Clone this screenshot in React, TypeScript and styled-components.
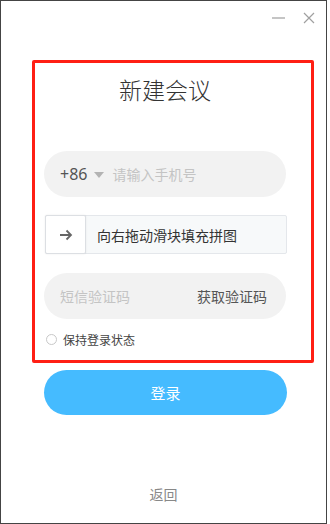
import styled, {createGlobalStyle} from "styled-components";

const Global = createGlobalStyle`
    html, body {
        margin: 0;
        padding: 0;
        background: #fff;
    }
    body {
        font-family: "Noto Sans CJK SC", "Noto Sans", sans-serif;
    }
`

const Window = styled.div`
    box-sizing: border-box;
    width: 327px;
    height: 524px;
    border: 1px solid #444;
    background: #fff;
    display: flex;
    flex-direction: column;
`

const TitleBar = styled.div`
    height: 36px;
    display: flex;
    justify-content: flex-end;
    align-items: center;
    padding-right: 10px;
    gap: 17px;
`

const Ctrl = styled.div`
    width: 14px;
    height: 14px;
    display: flex;
    align-items: center;
    justify-content: center;
    margin-top: -2px;
`

const Highlight = styled.div`
    box-sizing: border-box;
    margin: 23px 0 0 31px;
    width: 282px;
    height: 303px;
    border: 3px solid #ff1f14;
    border-radius: 2px;
    display: flex;
    flex-direction: column;
`

const Title = styled.div`
    margin: 10px 0 0 9px;
    width: 242px;
    height: 32px;
    line-height: 32px;
    text-align: center;
    font-size: 23px;
    font-weight: 300;
    color: #333;
`

const Field = styled.div<{ $mt: number }>`
    box-sizing: border-box;
    margin: ${p => p.$mt}px 0 0 9px;
    width: 242px;
    height: 46px;
    border-radius: 23px;
    background: #f2f2f2;
    display: flex;
    align-items: center;
    padding: 0 19px 0 16px;
    font-size: 14px;
`

const Prefix = styled.span`
    font-size: 16px;
    color: #555;
    font-family: "Noto Sans", sans-serif;
`

const Caret = styled.span`
    width: 0;
    height: 0;
    border-left: 5px solid transparent;
    border-right: 5px solid transparent;
    border-top: 6px solid #b3b3b3;
    margin: 2px 8px 0 7px;
`

const Placeholder = styled.span`
    color: #c4c4c4;
    flex: 1;
`

const Action = styled.span`
    color: #555;
`

const Slider = styled.div`
    box-sizing: border-box;
    margin: 18px 0 0 10px;
    width: 242px;
    height: 39px;
    border: 1px solid #e4e7eb;
    border-radius: 2px;
    background: #f7f9fa;
    display: flex;
    align-items: center;
`

const Knob = styled.div`
    box-sizing: border-box;
    width: 41px;
    height: 39px;
    margin: -1px 0 -1px -1px;
    background: #fff;
    border: 1px solid #dcdfe3;
    border-radius: 2px;
    box-shadow: 0 0 2px rgba(0, 0, 0, 0.08);
    display: flex;
    align-items: center;
    justify-content: center;
`

const SliderText = styled.span`
    margin-left: 11px;
    font-size: 14px;
    color: #333;
`

const Remember = styled.label`
    margin: 12px 0 0 11px;
    display: flex;
    align-items: center;
    font-size: 12px;
    color: #444;
    gap: 6px;
`

const Radio = styled.span`
    box-sizing: border-box;
    width: 11px;
    height: 11px;
    border-radius: 50%;
    border: 1px solid #c8c8c8;
`

const LoginButton = styled.button`
    margin: 7px 0 0 43px;
    width: 243px;
    height: 45px;
    border: none;
    border-radius: 23px;
    background: #45bbff;
    color: #fff;
    font-size: 15px;
    font-family: "Noto Sans CJK SC", sans-serif;
`

const Back = styled.div`
    margin-top: 69px;
    text-align: center;
    font-size: 14px;
    color: #888;
`

export default function App() {
    return (
        <>
            <Global/>
            <Window>
                <TitleBar>
                    <Ctrl>
                        <svg width="13" height="2" viewBox="0 0 13 2">
                            <rect width="13" height="1.2" y="0.4" fill="#a0a0a0"/>
                        </svg>
                    </Ctrl>
                    <Ctrl>
                        <svg width="12" height="12" viewBox="0 0 12 12">
                            <path d="M1 1 L11 11 M11 1 L1 11" stroke="#a0a0a0" strokeWidth="1.2"/>
                        </svg>
                    </Ctrl>
                </TitleBar>
                <Highlight>
                    <Title>新建会议</Title>
                    <Field $mt={46}>
                        <Prefix>+86</Prefix>
                        <Caret/>
                        <Placeholder>请输入手机号</Placeholder>
                    </Field>
                    <Slider>
                        <Knob>
                            <svg width="14" height="12" viewBox="0 0 14 12">
                                <path d="M1 6 H12 M7.5 1.5 L12 6 L7.5 10.5" stroke="#666" strokeWidth="1.8"
                                      fill="none"/>
                            </svg>
                        </Knob>
                        <SliderText>向右拖动滑块填充拼图</SliderText>
                    </Slider>
                    <Field $mt={19}>
                        <Placeholder>短信验证码</Placeholder>
                        <Action>获取验证码</Action>
                    </Field>
                    <Remember>
                        <Radio/>
                        保持登录状态
                    </Remember>
                </Highlight>
                <LoginButton>登录</LoginButton>
                <Back>返回</Back>
            </Window>
        </>
    )
}
